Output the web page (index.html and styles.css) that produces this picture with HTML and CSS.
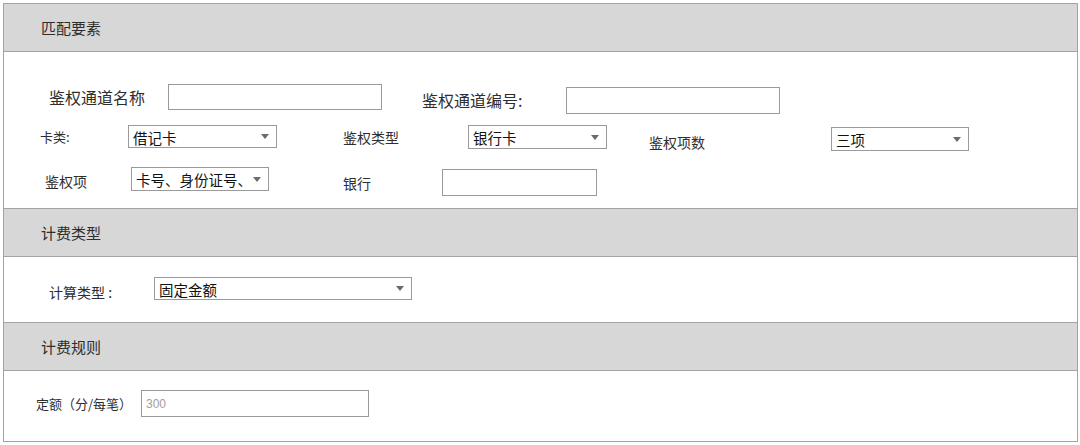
FILE: index.html
```html
<!DOCTYPE html>
<html lang="zh-CN">
<head>
<meta charset="utf-8">
<title>匹配要素</title>
<link rel="stylesheet" href="styles.css">
</head>
<body>
<div class="panel">
  <div class="section-head">匹配要素</div>
  <div class="section-body body-match">
    <div class="row r1">
      <label class="lbl lbl-name">鉴权通道名称</label>
      <div class="input in-name"></div>
      <label class="lbl lbl-code">鉴权通道编号:</label>
      <div class="input in-code"></div>
    </div>
    <div class="row r2">
      <label class="lbl lbl-cardtype">卡类:</label>
      <div class="select sel-card"><span>借记卡</span><i class="arrow"></i></div>
      <label class="lbl lbl-authtype">鉴权类型</label>
      <div class="select sel-authtype"><span>银行卡</span><i class="arrow"></i></div>
      <label class="lbl lbl-authnum">鉴权项数</label>
      <div class="select sel-authnum"><span>三项</span><i class="arrow"></i></div>
    </div>
    <div class="row r3">
      <label class="lbl lbl-authitem">鉴权项</label>
      <div class="select sel-authitem"><span>卡号、身份证号、</span><i class="arrow"></i></div>
      <label class="lbl lbl-bank">银行</label>
      <div class="input in-bank"></div>
    </div>
  </div>
  <div class="section-head">计费类型</div>
  <div class="section-body body-fee">
    <div class="row">
      <label class="lbl lbl-calc">计算类型 :</label>
      <div class="select sel-calc"><span>固定金额</span><i class="arrow"></i></div>
    </div>
  </div>
  <div class="section-head">计费规则</div>
  <div class="section-body body-rule">
    <div class="row">
      <label class="lbl lbl-amount">定额（分/每笔）</label>
      <div class="input in-amount"><span class="placeholder">300</span></div>
    </div>
  </div>
</div>
</body>
</html>
```

FILE: styles.css
```css
* { box-sizing: border-box; }
html, body { margin: 0; padding: 0; background: #fff; }
body {
  font-family: "Noto Sans CJK SC", "Noto Sans", sans-serif;
  color: #2e2e2e;
  padding: 3px 0 0 3px;
}
.panel {
  width: 1075px;
  height: 439px;
  border: 1px solid #a3a3a3;
  display: flex;
  flex-direction: column;
}
.section-head {
  height: 48px;
  flex: none;
  background: #d7d7d7;
  border-bottom: 1px solid #a3a3a3;
  display: flex;
  align-items: center;
  padding-left: 37px;
  font-size: 15px;
  color: #2e2e2e;
}
.section-body {
  flex: none;
  border-bottom: 1px solid #a3a3a3;
}
.section-body:last-child { border-bottom: 0; flex: 1; }

.body-match { height: 157px; padding-top: 32px; }
.body-fee { height: 66px; padding-top: 20px; }
.body-rule { padding-top: 19px; }

.row { display: flex; align-items: flex-start; }
.r2 { margin-top: 11px; }
.r3 { margin-top: 13px; }

.lbl { flex: none; white-space: nowrap; color: #2e2e2e; }

.input {
  flex: none;
  border: 1px solid #9a9a9a;
  background: #fff;
}
.select {
  flex: none;
  border: 1px solid #9a9a9a;
  background: #fff;
  display: flex;
  align-items: center;
  justify-content: space-between;
  padding: 2px 7px 0 4px;
  font-size: 14.5px;
  line-height: 18px;
  color: #111;
  white-space: nowrap;
  overflow: hidden;
}
.arrow {
  flex: none;
  width: 0;
  height: 0;
  border-left: 4px solid transparent;
  border-right: 4px solid transparent;
  border-top: 5px solid #6b6b6b;
  margin-top: -2px;
}

/* row 1 */
.lbl-name { margin-left: 45px; width: 119px; font-size: 16px; line-height: 26px; }
.in-name { width: 214px; height: 26px; }
.lbl-code { margin-left: 40px; width: 144px; font-size: 16px; line-height: 27px; margin-top: 3px; }
.in-code { width: 214px; height: 27px; margin-top: 3px; }

/* row 2 */
.lbl-cardtype { margin-left: 36px; width: 88px; font-size: 13px; line-height: 23px; }
.sel-card { width: 149px; height: 23px; }
.lbl-authtype { margin-left: 66px; width: 125px; font-size: 14px; line-height: 24px; }
.sel-authtype { width: 139px; height: 24px; }
.lbl-authnum { margin-left: 42px; width: 182px; font-size: 14px; line-height: 24px; margin-top: 5px; }
.sel-authnum { width: 138px; height: 24px; margin-top: 2px; }

/* row 3 */
.lbl-authitem { margin-left: 41px; width: 86px; font-size: 14px; line-height: 24px; margin-top: 2px; }
.sel-authitem { width: 138px; height: 24px; }
.lbl-bank { margin-left: 74px; width: 99px; font-size: 14px; line-height: 24px; margin-top: 4px; }
.in-bank { width: 155px; height: 27px; margin-top: 2px; }

/* fee type */
.lbl-calc { margin-left: 45px; width: 105px; font-size: 14px; line-height: 23px; margin-top: 4px; }
.sel-calc { width: 258px; height: 23px; }

/* fee rule */
.lbl-amount { margin-left: 32px; width: 105px; font-size: 13px; line-height: 27px; }
.in-amount {
  width: 228px;
  height: 27px;
  display: flex;
  align-items: center;
  padding-left: 4px;
}
.placeholder {
  font-family: "Liberation Sans", Arial, sans-serif;
  font-size: 12px;
  color: #a0a0a0;
}
```
